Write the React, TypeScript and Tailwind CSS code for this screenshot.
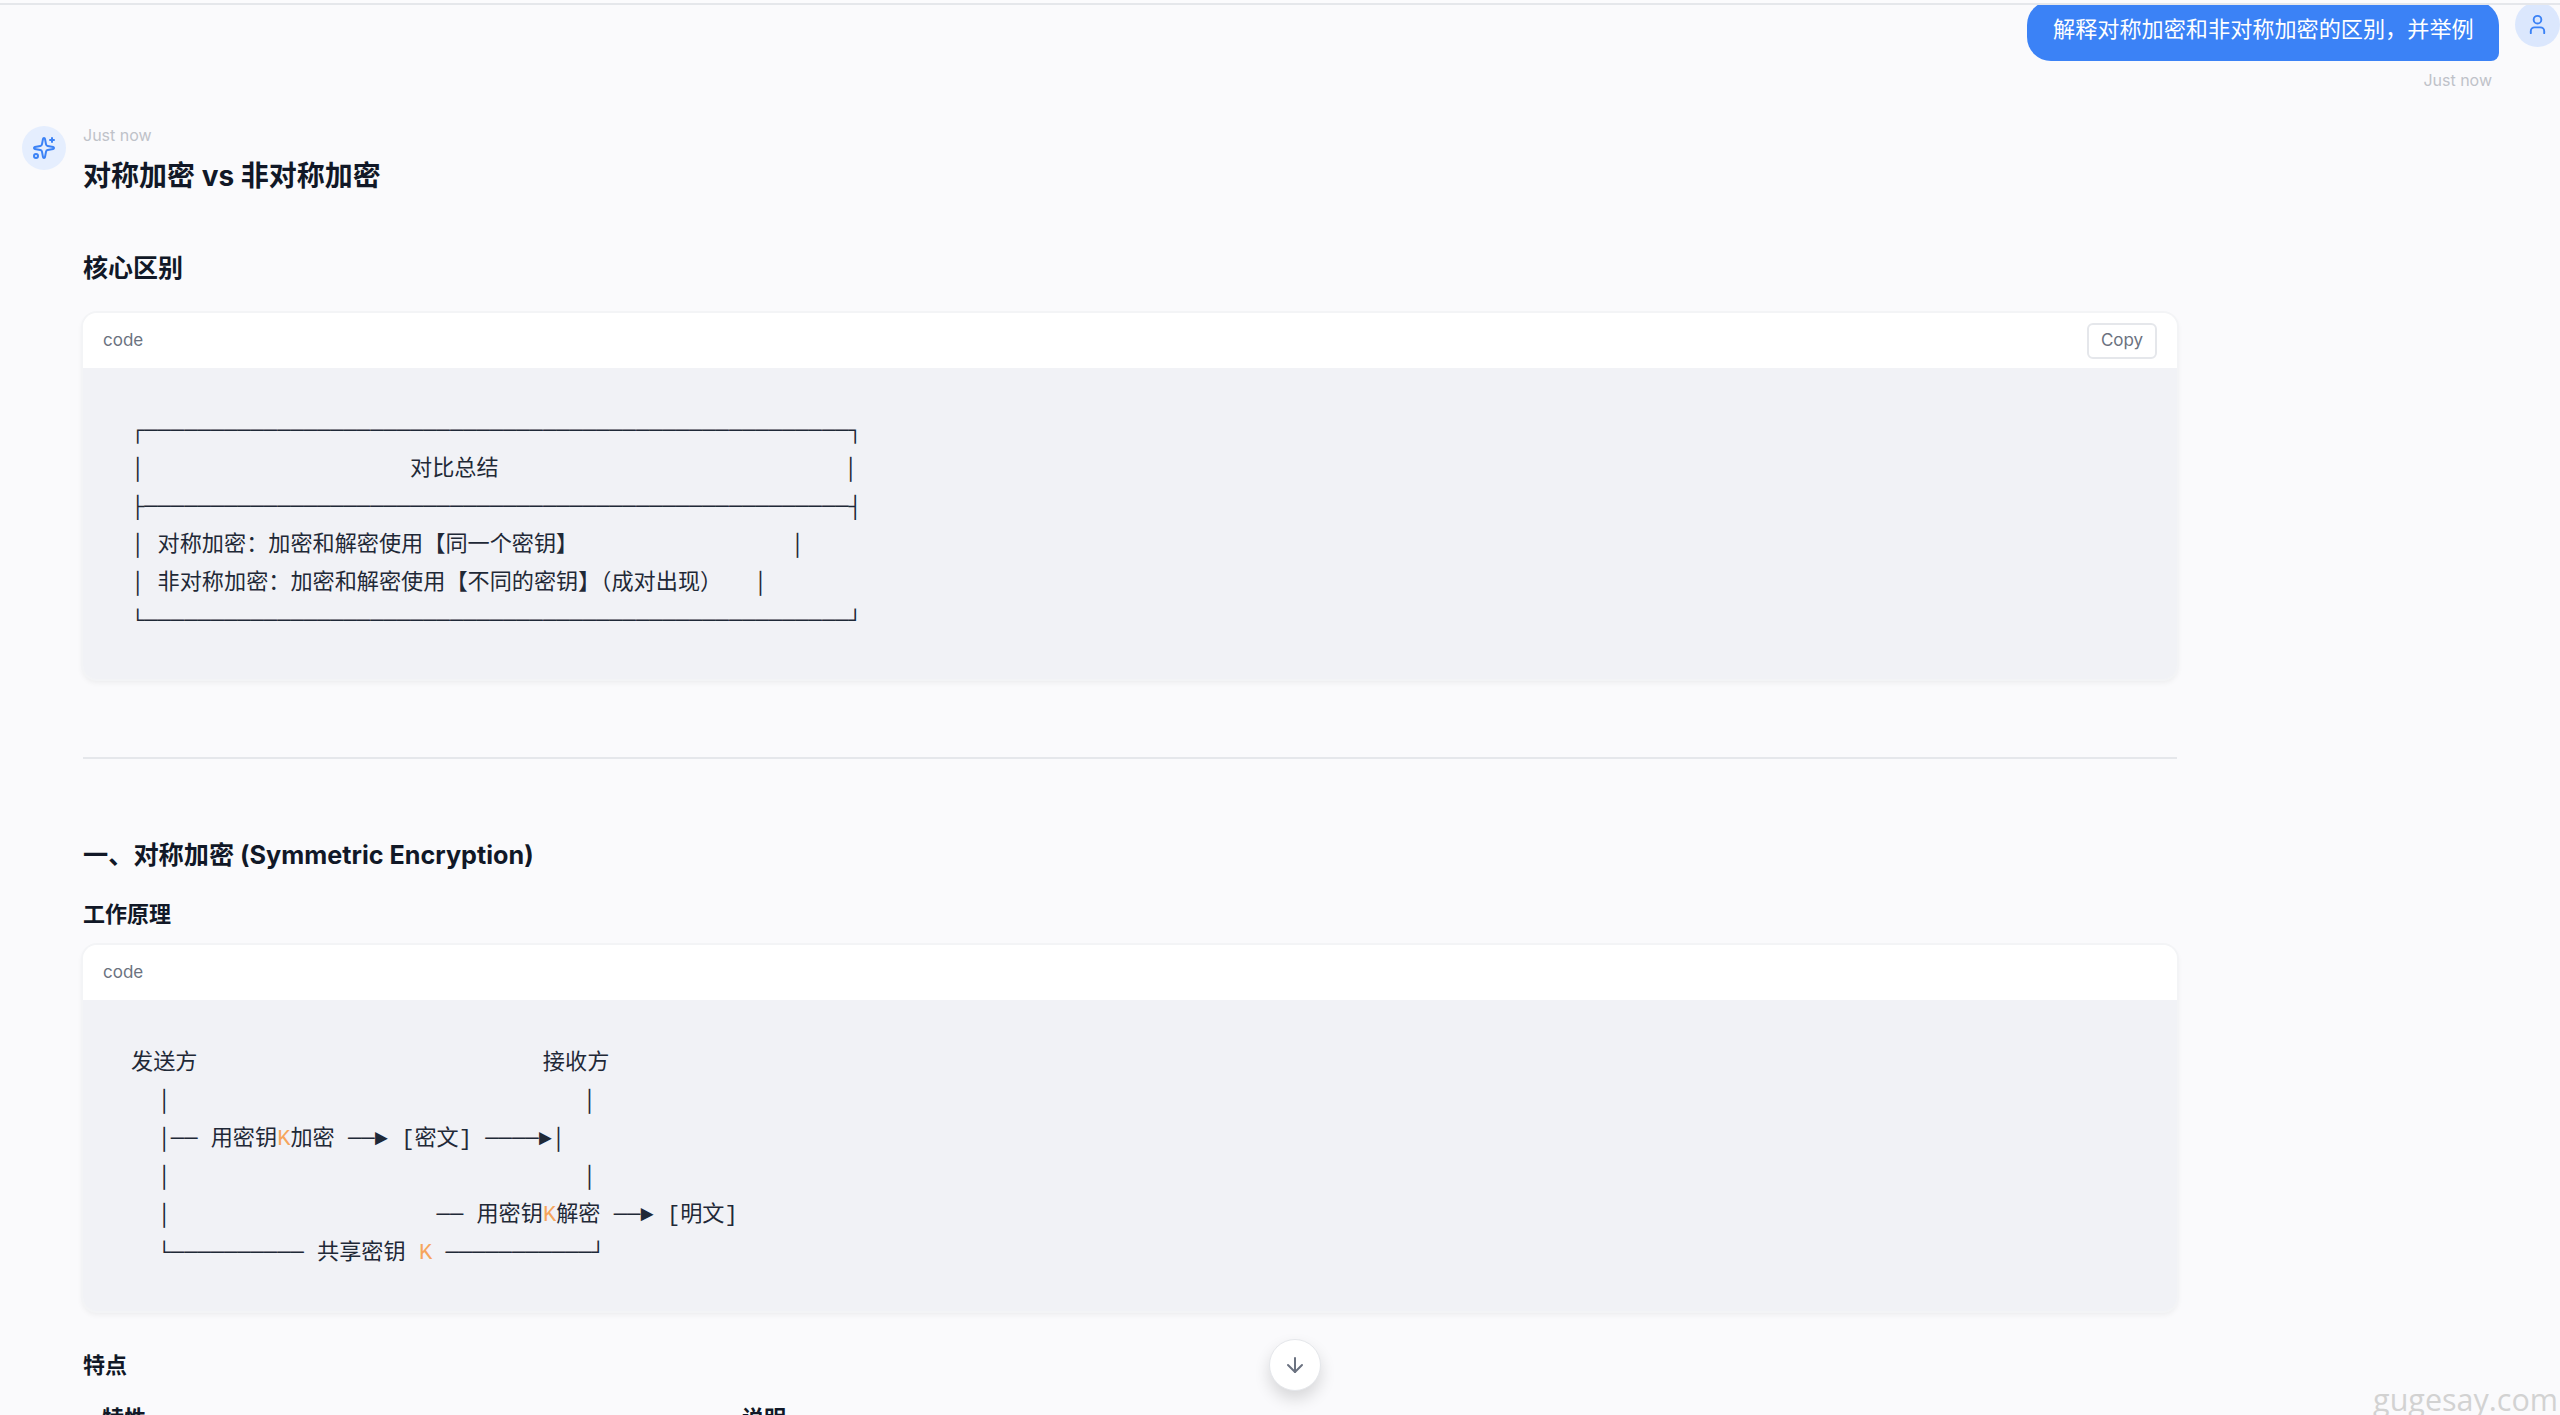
import React from "react";
import { ArrowDown, Sparkles, User } from "lucide-react";

const sans = "font-['Inter','Noto_Sans_CJK_SC',sans-serif]";

function K() {
  return <span className="text-[#f6a55c]">K</span>;
}

function CodeCard({ copy, children }: { copy?: boolean; children: React.ReactNode }) {
  return (
    <div className="rounded-[14px] overflow-hidden shadow-[0_0_0_2px_#f3f4f6,0_3px_6px_rgba(0,0,0,0.07)]">
      <div className="h-[55px] bg-white flex items-center justify-between px-[20px]">
        <span className="text-[17px] text-[#6b7280]">code</span>
        {copy && (
          <button className="w-[70px] h-[36px] rounded-[6px] border-2 border-[#e5e7eb] text-[17px] text-[#6b7280]">
            Copy
          </button>
        )}
      </div>
      <pre className="bg-[#f1f2f6] pl-[48px] pt-[45px] pb-[38px] font-['Liberation_Mono','Noto_Sans_CJK_SC',monospace] text-[22.15px] leading-[38px] text-[#1f2937]">
        {children}
      </pre>
    </div>
  );
}

export default function App() {
  return (
    <div className={`${sans} relative h-[1415px] overflow-hidden bg-[#fafafc] text-[#111827]`}>
      <div className="relative z-10 h-[5px] border-b-2 border-[#e5e7eb] bg-[#fbfbfd]" />
      <div className="flex justify-end gap-[16px]">
        <div className="flex flex-col items-end">
          <div className="-mt-[4px] rounded-[24px] rounded-br-[8px] bg-[#3b82f6] px-[26px] pb-[2px] h-[60px] flex items-center text-[22.15px] text-white w-[472px] whitespace-nowrap">
            解释对称加密和非对称加密的区别，并举例
          </div>
          <div className="mt-[10px] pr-[7px] text-[16px] leading-[18px] text-[#bfc2c9]">Just now</div>
        </div>
        <div className="w-[45px] h-[45px] -mt-[3px] rounded-full bg-[#dbe7fd] flex items-center justify-center text-[#3b82f6] shrink-0">
          <User size={23} strokeWidth={2} />
        </div>
      </div>

      <div className="flex gap-[17px] pl-[22px] w-[2177px] mt-[37px]">
        <div className="w-[44px] h-[44px] rounded-full bg-[#e5eefe] flex items-center justify-center text-[#3b82f6] shrink-0">
          <Sparkles size={24} strokeWidth={2} />
        </div>
        <div className="flex-1 min-w-0">
          <div className="text-[16px] leading-[18px] text-[#bfc2c9]">Just now</div>
          <h1 className="mt-[14px] text-[28px] leading-[36px] font-bold">对称加密 vs 非对称加密</h1>
          <h2 className="mt-[58px] text-[25px] leading-[32px] font-semibold">核心区别</h2>
          <div className="mt-[29px]">
            <CodeCard copy>
              {`┌─────────────────────────────────────────────────────┐
│                    对比总结                          │
├─────────────────────────────────────────────────────┤
│ 对称加密：加密和解密使用【同一个密钥】                │
│ 非对称加密：加密和解密使用【不同的密钥】（成对出现）  `}
              <span className="inline-block w-[5px]" />
              {`│
└─────────────────────────────────────────────────────┘`}
            </CodeCard>
          </div>
          <hr className="mt-[78px] border-0 h-[2px] bg-[#e5e7eb]" />
          <h2 className="mt-[79px] text-[25.2px] leading-[34px] font-bold">一、对称加密 (Symmetric Encryption)</h2>
          <h3 className="mt-[27px] text-[22px] leading-[30px] font-semibold">工作原理</h3>
          <div className="mt-[16px]">
            <CodeCard>
              {"发送方                          接收方\n  │                               │\n  │── 用密钥"}
              <K />
              {"加密 ──► [密文] ────►│\n  │                               │\n  │                    ── 用密钥"}
              <K />
              {"解密 ──► [明文]\n  └────────── 共享密钥 "}
              <K />
              {" ───────────┘"}
            </CodeCard>
          </div>
          <h3 className="mt-[39px] text-[22px] leading-[30px] font-semibold">特点</h3>
          <div className="mt-[23px] flex text-[22px] leading-[30px] font-semibold">
            <div className="w-[659px] pl-[19px]">特性</div>
            <div>说明</div>
          </div>
        </div>
      </div>

      <button className="absolute left-[1269px] top-[1339px] w-[52px] h-[52px] rounded-full bg-white border border-[#e5e7eb] shadow-[0_8px_16px_rgba(0,0,0,0.14)] flex items-center justify-center text-[#6b7280]">
        <ArrowDown size={24} strokeWidth={2} />
      </button>
      <div className="absolute right-[2px] bottom-0 font-['Open_Sans',sans-serif] text-[30.5px] leading-[32px] text-[#d2d2d2]">
        gugesay.com
      </div>
    </div>
  );
}
